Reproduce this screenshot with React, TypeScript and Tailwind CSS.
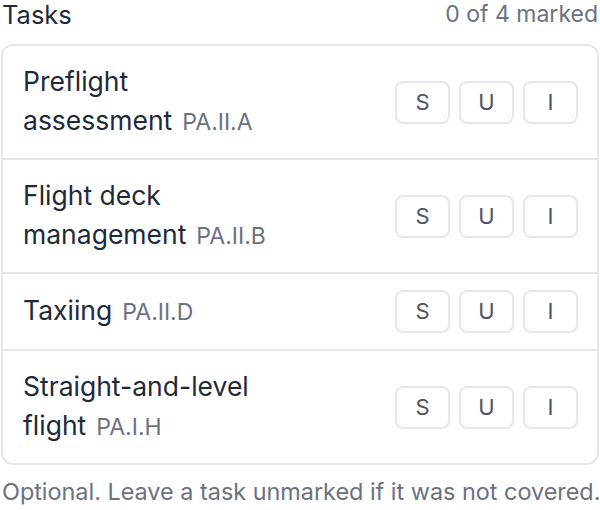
const TASKS = [
  { name: "Preflight assessment", code: "PA.II.A" },
  { name: "Flight deck management", code: "PA.II.B" },
  { name: "Taxiing", code: "PA.II.D" },
  { name: "Straight-and-level flight", code: "PA.I.H" },
];

const MARKS = ["S", "U", "I"];

export default function App() {
  return (
    <div className="w-[600px] h-[510px] bg-white px-px font-['Inter',sans-serif] overflow-hidden">
      <div className="flex items-center justify-between h-[29px] pl-px">
        <h2 className="text-[25.5px] leading-[29px] font-normal text-gray-800">Tasks</h2>
        <span className="text-[23px] leading-[29px] text-gray-500 pr-px">0 of 4 marked</span>
      </div>
      <div className="mt-[15px] w-[598px] border-2 border-gray-200 rounded-[12px] divide-y-2 divide-gray-200">
        {TASKS.map((t) => (
          <div key={t.code} className="flex items-center justify-between pl-[20px] pr-[19px] py-[16px]">
            <p className="w-[256px] text-[26.5px] leading-[39px] text-gray-800">
              {t.name}
              <span className="ml-[10px] text-[23px] text-gray-500">{t.code}</span>
            </p>
            <div className="flex gap-[9px]">
              {MARKS.map((m) => (
                <button
                  key={m}
                  className="w-[55px] h-[43px] rounded-[8px] border-2 border-gray-200 bg-white text-[22px] text-gray-600"
                >
                  {m}
                </button>
              ))}
            </div>
          </div>
        ))}
      </div>
      <p className="mt-[13px] pl-px text-[23.4px] leading-[28px] text-gray-500 whitespace-nowrap">
        Optional. Leave a task unmarked if it was not covered.
      </p>
    </div>
  );
}
